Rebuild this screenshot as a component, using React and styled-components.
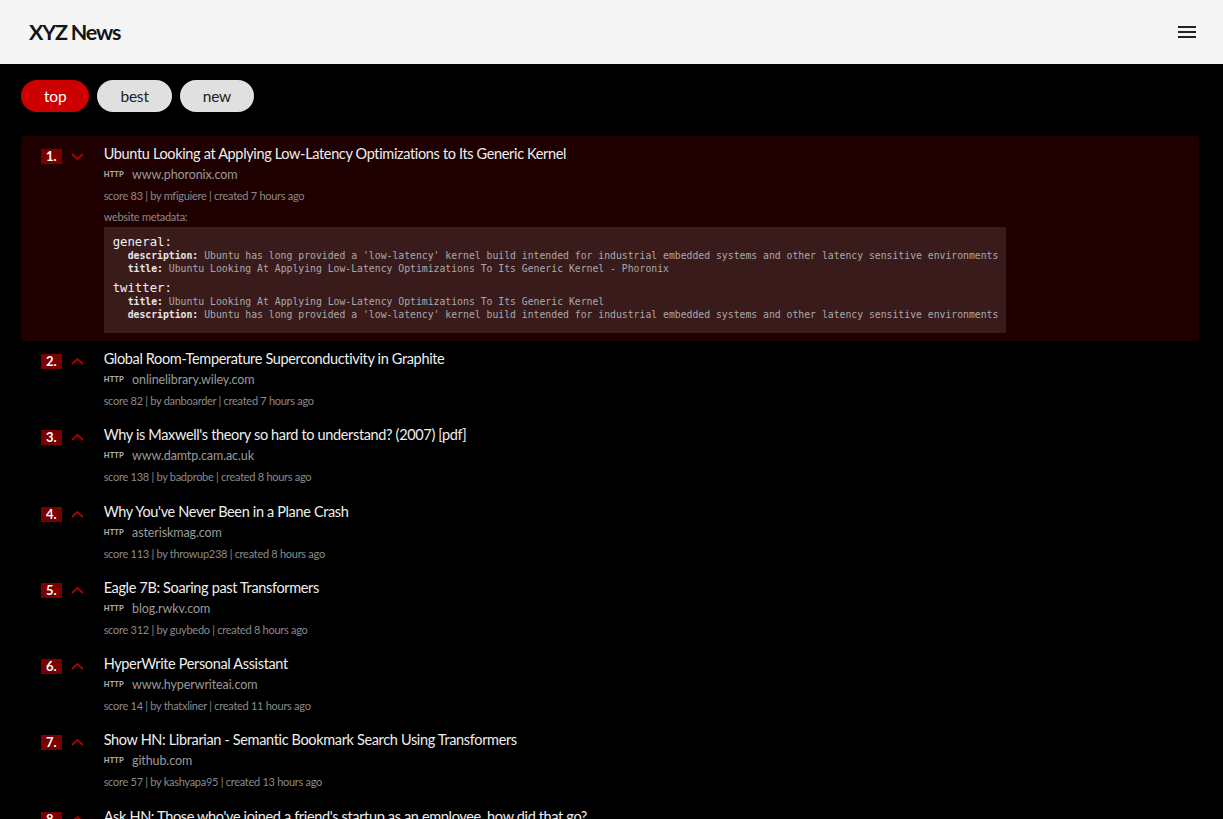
import React from "react";
import styled, { createGlobalStyle } from "styled-components";

const Global = createGlobalStyle`
  html, body { margin: 0; padding: 0; background: #000; }
  body { font-family: Lato, "Open Sans", sans-serif; color: #eee; }
  * { box-sizing: border-box; }
`;

const Header = styled.header`
  height: 64px;
  background: #f4f4f4;
  display: flex;
  align-items: center;
  justify-content: space-between;
  padding: 0 27px 0 29px;
`;

const Brand = styled.h1`
  margin: 0;
  font-size: 21.5px;
  font-weight: 700;
  color: #141414;
  letter-spacing: -1.2px;
`;

const Burger = styled.button`
  border: 0;
  background: none;
  padding: 0;
  width: 18px;
  height: 12px;
  display: flex;
  flex-direction: column;
  justify-content: space-between;
  cursor: pointer;
  span {
    display: block;
    height: 2px;
    background: #222;
  }
`;

const Tabs = styled.nav`
  display: flex;
  gap: 8px;
  padding: 16px 21px 0;
`;

const Tab = styled.button`
  height: 32px;
  padding: 0 23px;
  border: 0;
  border-radius: 16px;
  font-family: inherit;
  font-size: 15.5px;
  letter-spacing: -0.2px;
  background: ${(p) => (p.$active ? "#cc0000" : "#e0e0e0")};
  color: ${(p) => (p.$active ? "#fff" : "#222")};
`;

const List = styled.ol`
  list-style: none;
  margin: 24px 0 0;
  padding: 0 24px 0 21px;
`;

const Item = styled.li`
  display: flex;
  align-items: flex-start;
  padding: 7px 20px 6.3px;
  border-radius: 4px;
  background: ${(p) => (p.$open ? "#1f0000" : "transparent")};
  padding-bottom: ${(p) => (p.$open ? "8px" : "6.3px")};
`;

const Rank = styled.div`
  display: flex;
  align-items: center;
  height: 15px;
  margin-top: 6px;
  gap: 9px;
  flex-shrink: 0;
`;

const Badge = styled.span`
  background: #7a0000;
  color: #fff;
  font-size: 13px;
  font-weight: 700;
  line-height: 15px;
  padding: 0 5px;
`;

const Chevron = styled.svg`
  display: block;
  width: 13px;
  height: 7px;
  color: #b00000;
`;

const Body = styled.div`
  margin-left: 20px;
  min-width: 0;
`;

const Title = styled.a`
  display: block;
  font-size: 14.5px;
  letter-spacing: -0.35px;
  line-height: 21px;
  color: #eee;
  text-decoration: none;
  white-space: nowrap;
`;

const Domain = styled.div`
  display: flex;
  align-items: center;
  line-height: 21px;
  font-size: 12.5px;
  letter-spacing: -0.1px;
  color: #9a9a9a;
`;

const Proto = styled.span`
  font-size: 7.5px;
  font-weight: 900;
  letter-spacing: 0.2px;
  color: #aaa;
  margin-right: 8px;
`;

const Meta = styled.div`
  font-size: 11px;
  letter-spacing: -0.28px;
  line-height: 21px;
  color: #8a8a8a;
`;

const MetaBox = styled.div`
  display: inline-block;
  background: #391b1c;
  padding: 8px 8px 12px 9px;
  font-family: "DejaVu Sans Mono", monospace;
`;

const Group = styled.div`
  & + & { margin-top: 6px; }
`;

const GroupName = styled.div`
  font-size: 12.3px;
  line-height: 15px;
  color: #f2f2f2;
`;

const Entry = styled.div`
  padding-left: 15px;
  font-size: 9.8px;
  line-height: 12.5px;
  letter-spacing: -0.015px;
  color: #a9a9a9;
  white-space: nowrap;
  b {
    font-weight: 700;
    color: #e6e6e6;
  }
`;

const desc =
  "Ubuntu has long provided a 'low-latency' kernel build intended for industrial embedded systems and other latency sensitive environments";
const ttl = "Ubuntu Looking At Applying Low-Latency Optimizations To Its Generic Kernel";

const items = [
  {
    title: "Ubuntu Looking at Applying Low-Latency Optimizations to Its Generic Kernel",
    domain: "www.phoronix.com",
    score: 83,
    by: "mfiguiere",
    created: "7 hours ago",
    open: true,
    meta: [
      { name: "general", entries: [["description", desc], ["title", ttl + " - Phoronix"]] },
      { name: "twitter", entries: [["title", ttl], ["description", desc]] },
    ],
  },
  { title: "Global Room-Temperature Superconductivity in Graphite", domain: "onlinelibrary.wiley.com", score: 82, by: "danboarder", created: "7 hours ago" },
  { title: "Why is Maxwell's theory so hard to understand? (2007) [pdf]", domain: "www.damtp.cam.ac.uk", score: 138, by: "badprobe", created: "8 hours ago" },
  { title: "Why You've Never Been in a Plane Crash", domain: "asteriskmag.com", score: 113, by: "throwup238", created: "8 hours ago" },
  { title: "Eagle 7B: Soaring past Transformers", domain: "blog.rwkv.com", score: 312, by: "guybedo", created: "8 hours ago" },
  { title: "HyperWrite Personal Assistant", domain: "www.hyperwriteai.com", score: 14, by: "thatxliner", created: "11 hours ago" },
  { title: "Show HN: Librarian - Semantic Bookmark Search Using Transformers", domain: "github.com", score: 57, by: "kashyapa95", created: "13 hours ago" },
  { title: "Ask HN: Those who've joined a friend's startup as an employee, how did that go?", domain: "news.ycombinator.com", score: 41, by: "throwaway", created: "14 hours ago" },
];

const ChevronIcon = ({ down }) => (
  <Chevron viewBox="0 0 13 7" fill="none">
    <polyline
      points={down ? "1,1 6.5,6 12,1" : "1,6 6.5,1 12,6"}
      stroke="currentColor"
      strokeWidth="1.8"
    />
  </Chevron>
);

export default function App() {
  return (
    <>
      <Global />
      <Header>
        <Brand>XYZ News</Brand>
        <Burger aria-label="menu">
          <span />
          <span />
          <span />
        </Burger>
      </Header>
      <Tabs>
        <Tab $active>top</Tab>
        <Tab>best</Tab>
        <Tab>new</Tab>
      </Tabs>
      <List>
        {items.map((it, i) => (
          <Item key={i} $open={it.open}>
            <Rank>
              <Badge>{i + 1}.</Badge>
              <ChevronIcon down={it.open} />
            </Rank>
            <Body>
              <Title href="#">{it.title}</Title>
              <Domain>
                <Proto>HTTP</Proto>
                {it.domain}
              </Domain>
              <Meta>
                score {it.score} | by {it.by} | created {it.created}
              </Meta>
              {it.open && (
                <>
                  <Meta>website metadata:</Meta>
                  <MetaBox>
                    {it.meta.map((g) => (
                      <Group key={g.name}>
                        <GroupName>{g.name}:</GroupName>
                        {g.entries.map(([k, v]) => (
                          <Entry key={k}>
                            <b>{k}:</b> {v}
                          </Entry>
                        ))}
                      </Group>
                    ))}
                  </MetaBox>
                </>
              )}
            </Body>
          </Item>
        ))}
      </List>
    </>
  );
}
